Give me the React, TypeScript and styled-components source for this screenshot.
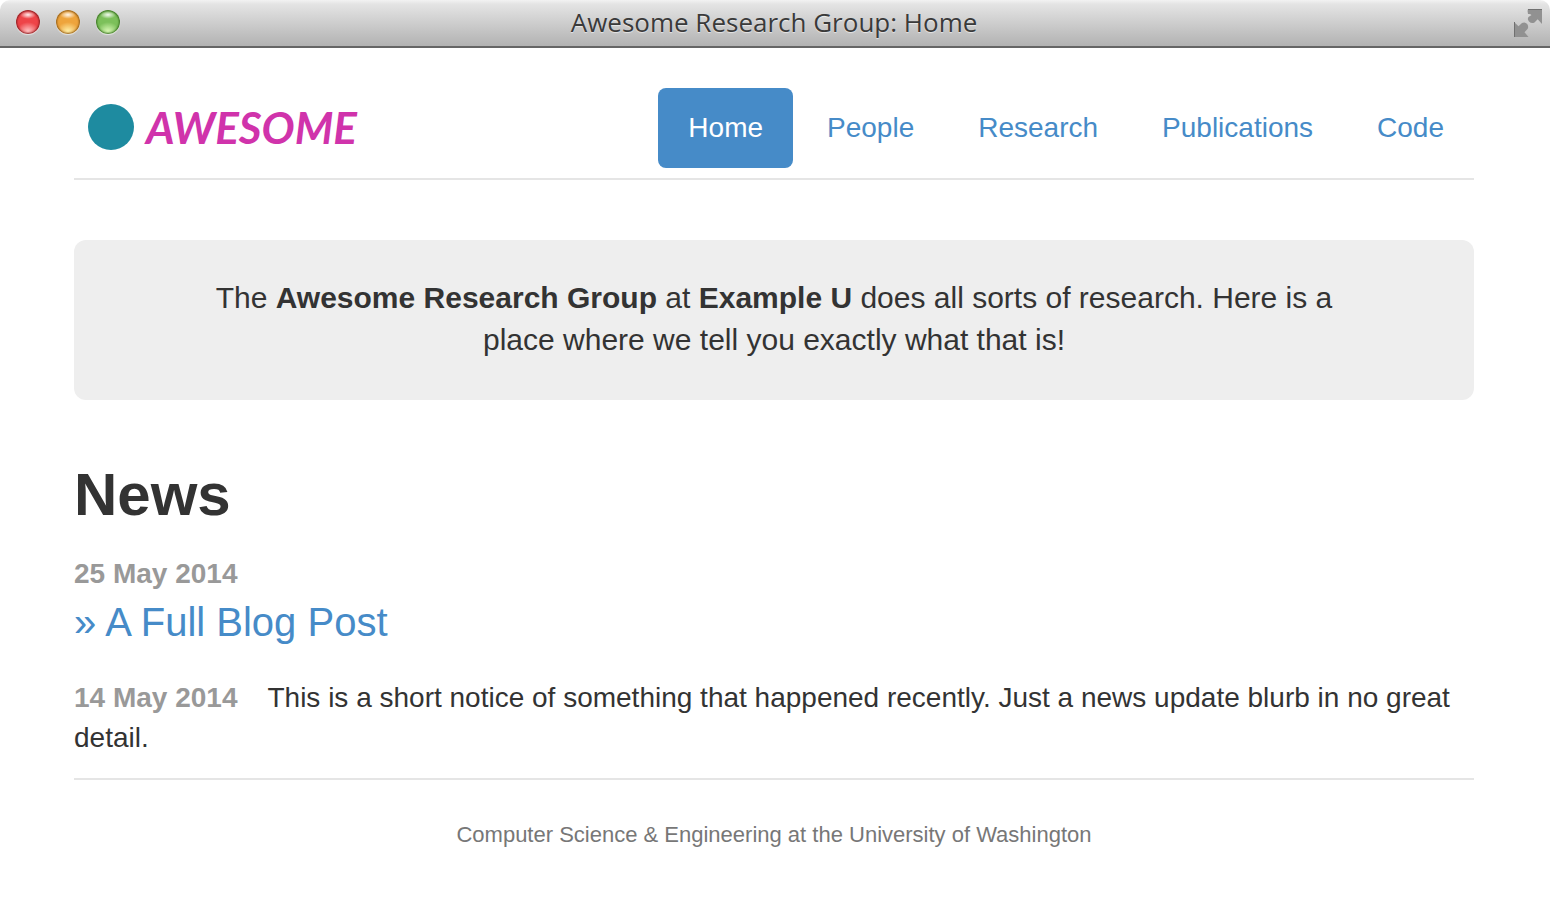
import React from "react";
import styled, { createGlobalStyle } from "styled-components";

const GlobalStyle = createGlobalStyle`
  * { box-sizing: border-box; }
  body {
    margin: 0;
    background: #fff;
    color: #333;
    font-family: "Liberation Sans", Arial, sans-serif;
    font-size: 28px;
    line-height: 40px;
  }
`;

const TitleBar = styled.div`
  display: grid;
  grid-template-columns: 1fr auto 1fr;
  align-items: center;
  height: 48px;
  padding: 0 8px 2px 6px;
  border-bottom: 2px solid #656565;
  border-radius: 10px 10px 0 0;
  background: linear-gradient(#f2f2f2 0, #e4e4e4 4px, #b2b2b2 100%);
`;

const Lights = styled.div`
  display: flex;
  gap: 16px;
  padding-left: 10px;
`;

const Light = styled.button<{ $edge: string; $mid: string; $glow: string }>`
  width: 24px;
  height: 24px;
  padding: 0;
  border: 0;
  border-radius: 50%;
  background:
    radial-gradient(ellipse 8px 4px at 50% 20%, rgba(255, 255, 255, 0.9), rgba(255, 255, 255, 0) 100%),
    radial-gradient(ellipse 11px 9px at 50% 88%, ${(p) => p.$glow}, transparent 100%),
    radial-gradient(circle at 50% 52%, ${(p) => p.$mid} 58%, ${(p) => p.$edge} 100%);
  background-color: ${(p) => p.$mid};
  box-shadow:
    inset 0 0 2px 1px ${(p) => p.$edge},
    0 1px 1px rgba(255, 255, 255, 0.6);
`;

const WindowTitle = styled.div`
  color: #3a3a3a;
  font-family: "Open Sans", "Noto Sans", sans-serif;
  font-size: 26px;
  font-weight: 500;
  line-height: 36px;
  text-shadow: 0 1px 1px rgba(255, 255, 255, 0.6);
`;

const FullScreen = styled.button`
  justify-self: end;
  display: flex;
  padding: 0;
  border: 0;
  background: none;
`;

const Page = styled.div`
  padding: 40px 76px 40px 74px;
`;

const Header = styled.header`
  display: flex;
  justify-content: space-between;
  align-items: center;
  padding-bottom: 10px;
  border-bottom: 2px solid #e5e5e5;
`;

const Logo = styled.a`
  display: flex;
  align-items: center;
  gap: 12px;
  padding: 0 0 2px 14px;
  color: #d033ab;
  font-family: Lato, sans-serif;
  font-size: 44px;
  font-style: italic;
  font-weight: 700;
  text-decoration: none;
`;

const Dot = styled.span`
  width: 46px;
  height: 46px;
  border-radius: 50%;
  background: #1e8ba0;
`;

const Nav = styled.nav`
  display: flex;
  gap: 4px;
`;

const NavLink = styled.a<{ $active?: boolean }>`
  padding: 20px 30px;
  border-radius: 8px;
  background: ${(p) => (p.$active ? "#468bc8" : "transparent")};
  color: ${(p) => (p.$active ? "#fff" : "#468bc8")};
  text-decoration: none;
`;

const Intro = styled.section`
  margin-top: 60px;
  padding: 37px 120px 39px;
  border-radius: 12px;
  background: #eee;
  font-size: 30px;
  line-height: 42px;
  text-align: center;

  p { margin: 0; }
`;

const Heading = styled.h1`
  margin: 62px 0 26px;
  font-size: 60px;
  line-height: 66px;
  font-weight: 700;
`;

const Post = styled.article`
  margin-bottom: 28px;
`;

const PostDate = styled.time<{ $inline?: boolean }>`
  display: ${(p) => (p.$inline ? "inline" : "block")};
  margin-right: ${(p) => (p.$inline ? "30px" : "0")};
  color: #999;
  font-weight: 700;
`;

const PostLink = styled.a`
  display: block;
  color: #468bc8;
  font-size: 40px;
  line-height: 56px;
  text-decoration: none;
`;

const Notice = styled.p`
  margin: 0;
`;

const Footer = styled.footer`
  margin-top: 20px;
  padding-top: 38px;
  border-top: 2px solid #e5e5e5;
  color: #777;
  font-size: 22px;
  line-height: 34px;
  text-align: center;
`;

const links = ["Home", "People", "Research", "Publications", "Code"];

export default function App() {
  return (
    <>
      <GlobalStyle />
      <TitleBar>
        <Lights>
          <Light aria-label="Close" $edge="#8e1f22" $mid="#ee4448" $glow="#ffc4c4" />
          <Light aria-label="Minimize" $edge="#96611a" $mid="#eea43c" $glow="#fff0a8" />
          <Light aria-label="Zoom" $edge="#3d7524" $mid="#7cc05a" $glow="#d8f8b4" />
        </Lights>
        <WindowTitle>Awesome Research Group: Home</WindowTitle>
        <FullScreen aria-label="Full screen">
          <svg width="28" height="30" viewBox="0 0 28 30" fill="#919191">
            <path d="M14 2H28V17L23.7 12.3L20.5 15.5Q17.5 17 15 14.500Q13 12 14.500 10L17.5 8Q16 6.500 14 7Q13 4 14 2Z" />
            <path d="M0 15L4.500 19.200L8 16Q11 14.500 13.200 17Q15 20 13.500 22L10.500 25.300L14.500 30H0Z" />
            <path d="M14 2.500H28M0.500 15V30" stroke="#707070" fill="none" />
          </svg>
        </FullScreen>
      </TitleBar>
      <Page>
        <Header>
          <Logo href="#">
            <Dot />
            AWESOME
          </Logo>
          <Nav>
            {links.map((name, i) => (
              <NavLink key={name} href="#" $active={i === 0}>
                {name}
              </NavLink>
            ))}
          </Nav>
        </Header>
        <main>
          <Intro>
            <p>
              The <strong>Awesome Research Group</strong> at <strong>Example U</strong> does all
              sorts of research. Here is a place where we tell you exactly what that is!
            </p>
          </Intro>
          <Heading>News</Heading>
          <Post>
            <PostDate>25 May 2014</PostDate>
            <PostLink href="#">» A Full Blog Post</PostLink>
          </Post>
          <Notice>
            <PostDate $inline>14 May 2014</PostDate>
            This is a short notice of something that happened recently. Just a news update blurb in
            no great detail.
          </Notice>
        </main>
        <Footer>Computer Science &amp; Engineering at the University of Washington</Footer>
      </Page>
    </>
  );
}
